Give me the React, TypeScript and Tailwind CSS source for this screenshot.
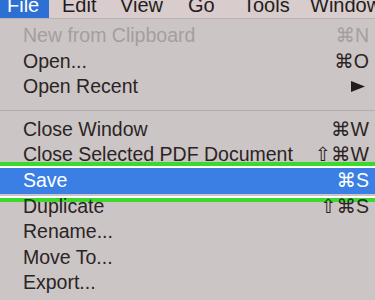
const font = { fontFamily: '"Liberation Sans", "DejaVu Sans", Arial, sans-serif' };

type Item = {
  label: string;
  shortcut?: string;
  submenu?: boolean;
  disabled?: boolean;
  selected?: boolean;
};

const groupOne: Item[] = [
  { label: "New from Clipboard", shortcut: "⌘N", disabled: true },
  { label: "Open...", shortcut: "⌘O" },
  { label: "Open Recent", submenu: true },
];

const groupTwo: Item[] = [
  { label: "Close Window", shortcut: "⌘W" },
  { label: "Close Selected PDF Document", shortcut: "⇧⌘W" },
  { label: "Save", shortcut: "⌘S", selected: true },
  { label: "Duplicate", shortcut: "⇧⌘S" },
  { label: "Rename..." },
  { label: "Move To..." },
  { label: "Export..." },
];

function MenuRow({ item }: { item: Item }) {
  const color = item.selected
    ? "text-white"
    : item.disabled
    ? "text-[#a59e9e]"
    : "text-[#2a2424]";

  return (
    <div
      className={`relative flex h-[25.6px] items-center justify-between pl-[23px] pr-[6px] text-[19.5px] leading-none ${color} ${
        item.selected ? "bg-[#3b7fe4]" : ""
      }`}
    >
      <span className="whitespace-nowrap">{item.label}</span>
      {item.shortcut && <span className="whitespace-nowrap">{item.shortcut}</span>}
      {item.submenu && (
        <svg width="14" height="11" viewBox="0 0 14 11" className="mr-[4px]">
          <polygon points="0,0 14,5.5 0,11" fill="#231d1d" />
        </svg>
      )}
      {item.selected && (
        // green call-out box drawn over the highlighted row
        <div className="pointer-events-none absolute -top-[6px] -bottom-[8px] left-0 right-0 border-y-[4px] border-[#3bd92c]">
          <div className="h-full w-full border-y-2 border-white" />
        </div>
      )}
    </div>
  );
}

export default function App() {
  return (
    <div className="h-[300px] w-[375px] overflow-hidden bg-[#ccc5c5]" style={font}>
      {/* menu bar */}
      <div className="flex h-[19px] items-start border-b border-[#bdb3b3] bg-[#d8cccc] text-[20px] leading-none text-[#241c1c]">
        <div className="h-full w-[49px] shrink-0 bg-[#2d6fd3] pl-[7px] text-white">
          <span className="-mt-[5px] block">File</span>
        </div>
        <span className="-mt-[5px] ml-[13px] w-[58px] shrink-0">Edit</span>
        <span className="-mt-[5px] w-[68px] shrink-0">View</span>
        <span className="-mt-[5px] w-[55px] shrink-0">Go</span>
        <span className="-mt-[5px] w-[67px] shrink-0">Tools</span>
        <span className="-mt-[5px] shrink-0 whitespace-nowrap">Window</span>
      </div>

      {/* dropdown */}
      <div className="pt-[4px]">
        {groupOne.map((item) => (
          <MenuRow key={item.label} item={item} />
        ))}
        <div className="pb-[6px] pt-[10px]">
          <div className="h-px bg-[#b5adad]" />
        </div>
        {groupTwo.map((item) => (
          <MenuRow key={item.label} item={item} />
        ))}
      </div>
    </div>
  );
}
